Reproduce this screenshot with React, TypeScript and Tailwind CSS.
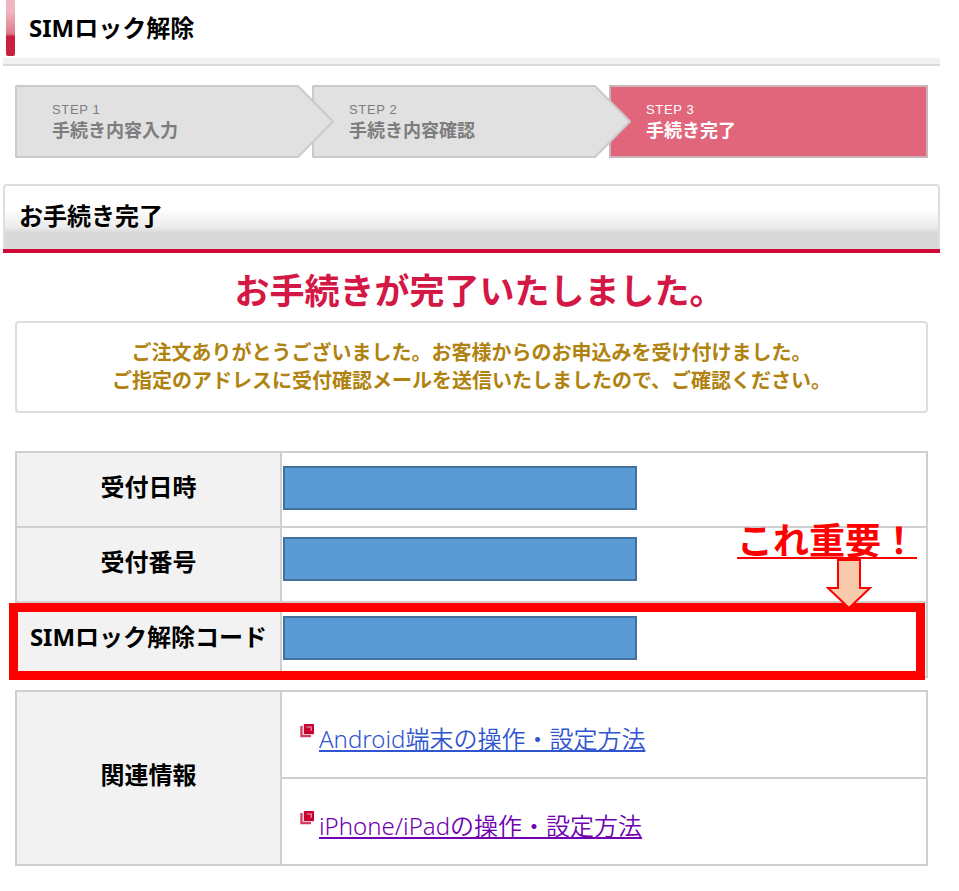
import type { ReactNode } from "react";

const steps = [
  { label: "STEP 1", title: "手続き内容入力" },
  { label: "STEP 2", title: "手続き内容確認" },
  { label: "STEP 3", title: "手続き完了", current: true },
];

const receipt = [
  { name: "受付日時", cell: "pt-[13px]" },
  { name: "受付番号", cell: "pt-[9px]" },
  { name: "SIMロック解除コード", cell: "pt-[13px]" },
];

const links = [
  { text: "Android端末の操作・設定方法", color: "text-[#2f55cf]" },
  { text: "iPhone/iPadの操作・設定方法", color: "text-[#7000b0]" },
];

function StepHead() {
  return (
    <svg
      className="absolute -top-0.5 left-full z-10 h-[73px] w-9"
      viewBox="0 0 36 73"
      aria-hidden="true"
    >
      <path d="M-1 1H0L35 36.5L0 72H-1Z" fill="#e1e1e1" />
      <path d="M-1 1H0L35 36.5L0 72H-1" fill="none" stroke="#cacaca" strokeWidth="2" />
    </svg>
  );
}

function WindowIcon() {
  return (
    <svg className="mt-px h-3.5 w-3.5 shrink-0" viewBox="0 0 14 14" aria-hidden="true">
      <path d="M1.5 2V12H11" fill="none" stroke="#d43c60" strokeWidth="2.4" />
      <path d="M3.3 0V10.5H14" fill="none" stroke="#f6c9d3" strokeWidth="1" />
      <rect x="4" y="0" width="10" height="10" rx="0.5" fill="#c8002f" />
      <path d="M6.5 3H11.2V6.8" fill="none" stroke="#f0a9b9" strokeWidth="1.2" />
    </svg>
  );
}

function HeadCell({ children, rows }: { children: ReactNode; rows?: number }) {
  return (
    <th
      scope="row"
      rowSpan={rows}
      className="w-[265px] border-2 border-[#cfcfcf] bg-[#f2f2f2] p-0 pb-1.5 text-center font-bold whitespace-nowrap"
    >
      {children}
    </th>
  );
}

export default function App() {
  return (
    <main className="min-h-screen bg-white pr-[19px] pb-6 pl-[3px] font-['Noto_Sans','Noto_Sans_CJK_JP',sans-serif] text-2xl leading-8 text-black">
      <header className="flex h-[66px] flex-col justify-between">
        <div className="flex h-14 gap-3.5 pl-[3px]">
          <span className="h-full w-[9px] rounded-b-xs bg-linear-to-b from-[#f0b6c0] from-20% via-[#dc7a8c] via-60% to-[#c8203f] to-65%" />
          <h1 className="pt-3 font-bold">SIMロック解除</h1>
        </div>
        <div className="h-2 border-b-2 border-[#d9d9d9] bg-[#f1f1f1]" />
      </header>

      <ol className="mx-3 mt-[19px] grid grid-cols-[283fr_283fr_319fr] gap-3.5">
        {steps.map((step) => (
          <li
            key={step.label}
            className={
              step.current
                ? "relative h-[73px] border-2 border-[#c9b5b9] bg-[#e1667b] pt-[15px] pl-[35px] text-white"
                : "relative h-[73px] rounded-l-xs border-2 border-r-0 border-[#cacaca] bg-[#e1e1e1] pt-[15px] pl-[35px] text-[#7d7d7d]"
            }
          >
            <p className="font-['Liberation_Sans',sans-serif] text-[13px] leading-4 tracking-wider">
              {step.label}
            </p>
            <p className="text-lg leading-6 font-bold">{step.title}</p>
            {!step.current && <StepHead />}
          </li>
        ))}
      </ol>

      <div className="mt-[26px] border-b-4 border-[#cc0a33]">
        <h2 className="h-[65px] rounded-t-sm border-2 border-b-0 border-[#dedede] bg-linear-to-b from-white from-35% via-[#ececec] via-65% to-[#d8d8d8] to-75% pt-3.5 pl-3.5 font-bold">
          お手続き完了
        </h2>
      </div>

      <div className="mx-3">
        <p className="mt-4 pl-4 text-center text-[35px] leading-[44px] font-bold text-[#d41846]">
          お手続きが完了いたしました。
        </p>
        <p className="mt-2 rounded-sm border-2 border-[#dedede] px-4 py-4 text-center text-xl leading-7 font-bold text-[#b0820f]">
          ご注文ありがとうございました。お客様からのお申込みを受け付けました。
          <br />
          ご指定のアドレスに受付確認メールを送信いたしましたので、ご確認ください。
        </p>

        <div className="relative mt-[38px]">
          <table className="w-full table-fixed border-collapse">
            <tbody>
              {receipt.map((row) => (
                <tr key={row.name} className="h-[75px]">
                  <HeadCell>{row.name}</HeadCell>
                  <td className={`border-2 border-[#cfcfcf] p-0 pl-px align-top ${row.cell}`}>
                    <div className="h-11 w-[354px] border-2 border-[#41719c] bg-[#5b9bd5]" />
                  </td>
                </tr>
              ))}
            </tbody>
          </table>

          {/* 注釈 */}
          <div className="absolute top-[152px] right-[3px] -left-1.5 h-[77px] border-9 border-[#ff0000]" />
          <p className="absolute top-[74px] right-[11px] border-b-2 border-[#ff0000] text-4xl leading-8 font-bold text-[#ff0000]">
            これ重要！
          </p>
          <svg
            className="absolute top-[107px] right-[56px] h-[51px] w-[46px]"
            viewBox="0 0 46 51"
            aria-hidden="true"
          >
            <path
              d="M12 2H34V30H44L23 50L2 30H12Z"
              fill="#f8cbad"
              stroke="#ff0000"
              strokeWidth="2"
            />
          </svg>
        </div>

        <table className="mt-3 w-full table-fixed border-collapse">
          <tbody>
            {links.map((link, i) => (
              <tr key={link.text} className="h-[87px]">
                {i === 0 && <HeadCell rows={2}>関連情報</HeadCell>}
                <td className="border-2 border-[#cfcfcf] p-0 pt-2 pl-[18px]">
                  <div className="flex gap-[5px]">
                    <WindowIcon />
                    <a
                      href="#"
                      className={`font-[350] underline decoration-2 underline-offset-2 ${link.color}`}
                    >
                      {link.text}
                    </a>
                  </div>
                </td>
              </tr>
            ))}
          </tbody>
        </table>
      </div>
    </main>
  );
}
